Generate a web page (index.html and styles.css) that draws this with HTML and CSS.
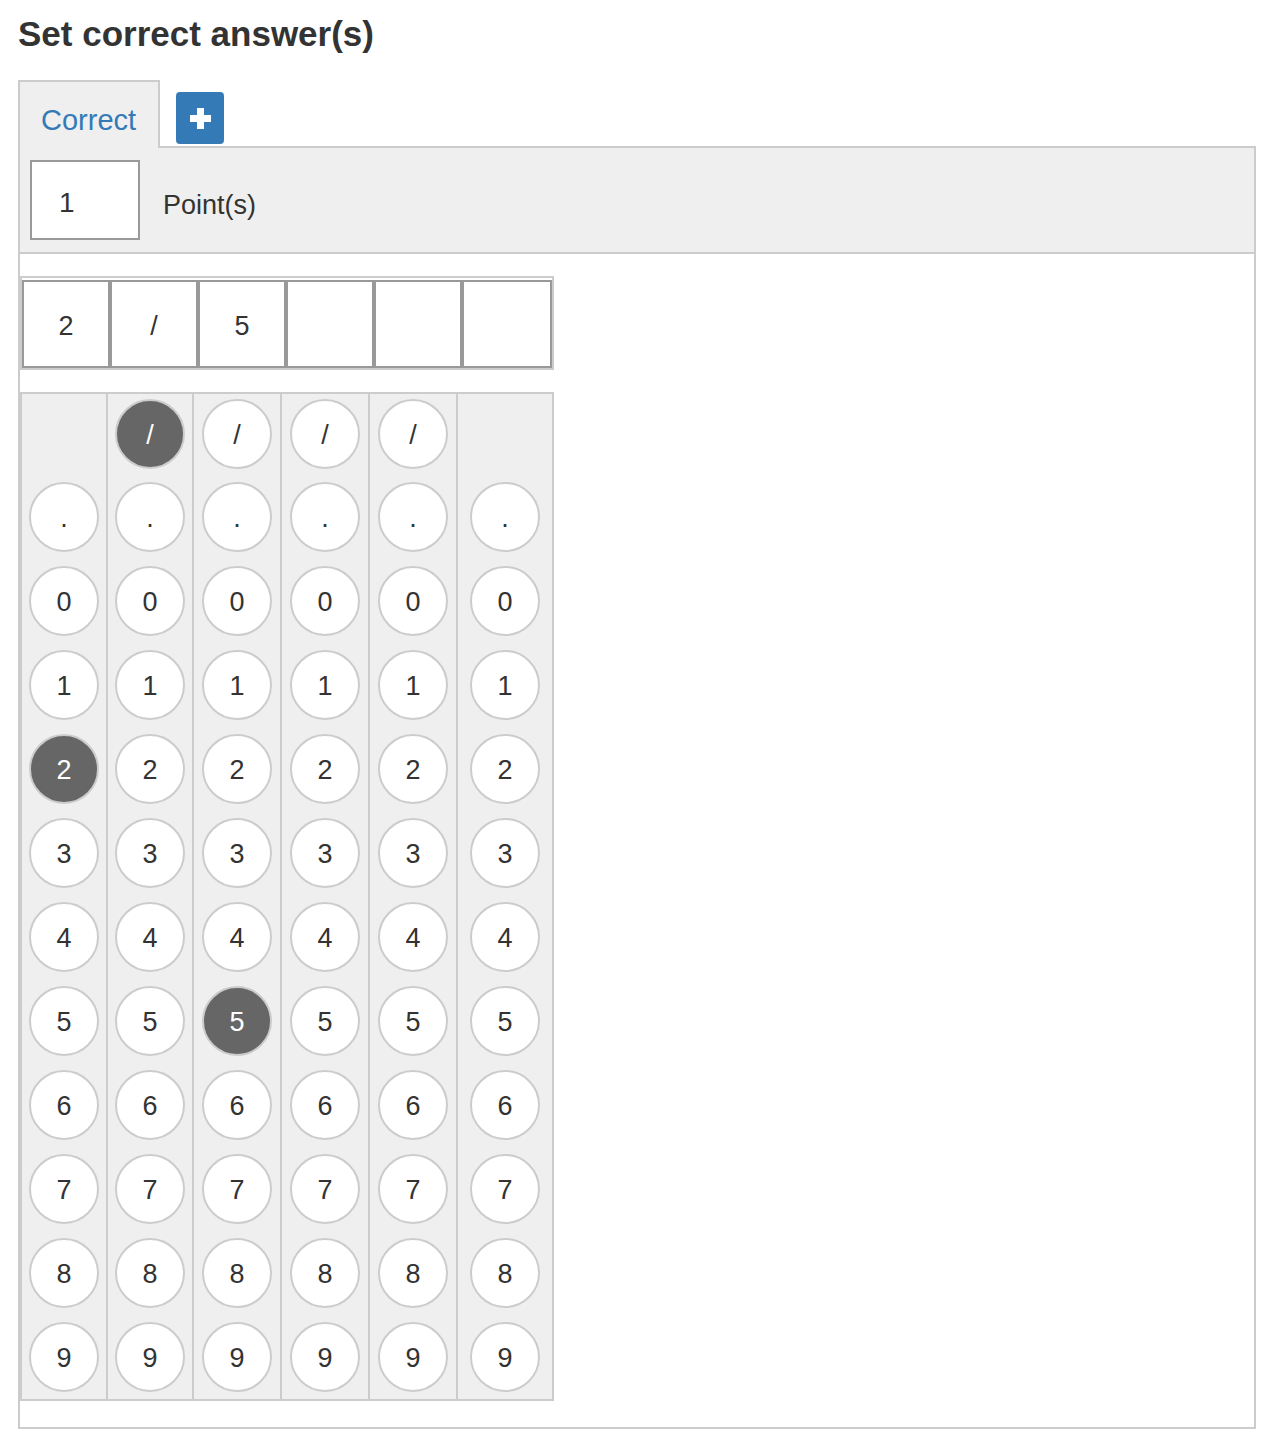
FILE: index.html
```html
<!DOCTYPE html>
<html>
<head>
    <title>Set correct answer(s)</title>
    <link rel="stylesheet" href="styles.css">
</head>
<body>
    <h1>Set correct answer(s)</h1>

    <div class="tabs">
        <div class="tab">Correct</div>
        <button class="add" title="Add answer">
            <svg width="21" height="21" viewBox="0 0 21 21"><path d="M7 0h7v7h7v7h-7v7H7v-7H0V7h7z" fill="#fff"/></svg>
        </button>
    </div>

    <div class="box">
        <div class="points">
            <input class="score" type="text" value="1">
            <span class="points-label">Point(s)</span>
        </div>

        <div class="answer">
            <div class="cell">2</div>
            <div class="cell">/</div>
            <div class="cell">5</div>
            <div class="cell"></div>
            <div class="cell"></div>
            <div class="cell"></div>
        </div>

        <div class="grid">
            <div class="col">
                <span class="bubble blank"></span>
                <span class="bubble">.</span>
                <span class="bubble">0</span>
                <span class="bubble">1</span>
                <span class="bubble on">2</span>
                <span class="bubble">3</span>
                <span class="bubble">4</span>
                <span class="bubble">5</span>
                <span class="bubble">6</span>
                <span class="bubble">7</span>
                <span class="bubble">8</span>
                <span class="bubble">9</span>
            </div>
            <div class="col">
                <span class="bubble on">/</span>
                <span class="bubble">.</span>
                <span class="bubble">0</span>
                <span class="bubble">1</span>
                <span class="bubble">2</span>
                <span class="bubble">3</span>
                <span class="bubble">4</span>
                <span class="bubble">5</span>
                <span class="bubble">6</span>
                <span class="bubble">7</span>
                <span class="bubble">8</span>
                <span class="bubble">9</span>
            </div>
            <div class="col">
                <span class="bubble">/</span>
                <span class="bubble">.</span>
                <span class="bubble">0</span>
                <span class="bubble">1</span>
                <span class="bubble">2</span>
                <span class="bubble">3</span>
                <span class="bubble">4</span>
                <span class="bubble on">5</span>
                <span class="bubble">6</span>
                <span class="bubble">7</span>
                <span class="bubble">8</span>
                <span class="bubble">9</span>
            </div>
            <div class="col">
                <span class="bubble">/</span>
                <span class="bubble">.</span>
                <span class="bubble">0</span>
                <span class="bubble">1</span>
                <span class="bubble">2</span>
                <span class="bubble">3</span>
                <span class="bubble">4</span>
                <span class="bubble">5</span>
                <span class="bubble">6</span>
                <span class="bubble">7</span>
                <span class="bubble">8</span>
                <span class="bubble">9</span>
            </div>
            <div class="col">
                <span class="bubble">/</span>
                <span class="bubble">.</span>
                <span class="bubble">0</span>
                <span class="bubble">1</span>
                <span class="bubble">2</span>
                <span class="bubble">3</span>
                <span class="bubble">4</span>
                <span class="bubble">5</span>
                <span class="bubble">6</span>
                <span class="bubble">7</span>
                <span class="bubble">8</span>
                <span class="bubble">9</span>
            </div>
            <div class="col">
                <span class="bubble blank"></span>
                <span class="bubble">.</span>
                <span class="bubble">0</span>
                <span class="bubble">1</span>
                <span class="bubble">2</span>
                <span class="bubble">3</span>
                <span class="bubble">4</span>
                <span class="bubble">5</span>
                <span class="bubble">6</span>
                <span class="bubble">7</span>
                <span class="bubble">8</span>
                <span class="bubble">9</span>
            </div>
        </div>
    </div>
</body>
</html>
```

FILE: styles.css
```css
body { margin: 0; padding: 0 18px; background: #fff; color: #333; font-family: "Liberation Sans", Arial, sans-serif; }
h1 { margin: 14px 0 26px; font-size: 35px; line-height: 40px; font-weight: bold; color: #333; }

.tabs { display: flex; align-items: flex-end; }
.tab { position: relative; z-index: 1; margin-bottom: -2px; padding: 22px 22px 11px 21px; border: 2px solid #ccc; border-bottom: none; background: #efefef; color: #337ab7; font-size: 29px; line-height: 33px; }
.add { display: flex; align-items: center; justify-content: center; width: 48px; height: 52px; margin: 0 0 2px 16px; padding: 0; border: none; border-radius: 4px; background: #337ab7; cursor: pointer; }

.box { border: 2px solid #ccc; padding-bottom: 26px; }
.points { display: flex; align-items: center; padding: 12px 10px; background: #efefef; border-bottom: 2px solid #ccc; }
.score { box-sizing: border-box; width: 110px; height: 80px; padding: 5px 0 0 27px; border: 2px solid #999; background: #fff; color: #333; font-family: "Liberation Sans", Arial, sans-serif; font-size: 28px; outline: none; }
.points-label { margin: 11px 0 0 23px; font-size: 27px; }

.answer { display: flex; width: 530px; margin-top: 22px; padding-top: 2px; border: 2px solid #ccc; }
.cell { box-sizing: border-box; display: flex; align-items: center; justify-content: center; width: 88px; height: 88px; padding-top: 4px; border: 2px solid #999; background: #fff; font-size: 27px; }
.cell:last-child { width: 90px; }

.grid { display: grid; grid-template-columns: 84px 86px 88px 88px 88px 96px; width: 530px; margin-top: 22px; border: 2px solid #ccc; background: #efefef; }
.col { display: flex; flex-direction: column; align-items: center; }
.col + .col { border-left: 2px solid #ccc; }
.bubble { box-sizing: border-box; display: flex; align-items: center; justify-content: center; width: 70px; height: 70px; margin: 7px 0; padding-top: 3px; border: 2px solid #ccc; border-radius: 50%; background: #fff; color: #333; font-size: 27px; }
.bubble:first-child { margin: 5px 0 6px; }
.bubble.on { background: #666; color: #fff; }
.bubble.blank { visibility: hidden; }
```
